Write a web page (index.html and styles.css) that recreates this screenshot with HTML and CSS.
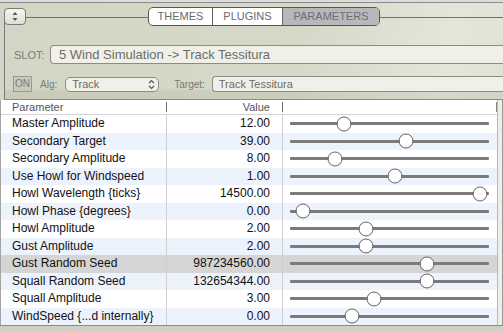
FILE: index.html
```html
<!DOCTYPE html>
<html lang="en">
<head>
    <meta charset="UTF-8">
    <title>Parameters</title>
    <link rel="stylesheet" href="styles.css">
</head>
<body>
    <div class="window">
        <div class="titlebar"></div>

        <div class="chrome">
            <div class="panel">
                <div class="tabbar">
                    <div class="stepper">
                        <svg width="8" height="11" viewBox="0 0 8 11">
                            <path d="M4 1 L6.5 4 L1.5 4 Z" fill="#555"/>
                            <path d="M4 10 L6.5 7 L1.5 7 Z" fill="#555"/>
                        </svg>
                    </div>
                    <div class="tabs">
                        <div class="tab tab-themes">THEMES</div>
                        <div class="tab tab-plugins">PLUGINS</div>
                        <div class="tab tab-params active">PARAMETERS</div>
                    </div>
                </div>

                <div class="slot-row">
                    <span class="label slot-label">SLOT:</span>
                    <div class="field slot-field">5 Wind Simulation -&gt; Track Tessitura</div>
                </div>

                <div class="alg-row">
                    <div class="on-btn">ON</div>
                    <span class="label alg-label">Alg:</span>
                    <div class="popup">
                        <span>Track</span>
                        <svg width="7" height="11" viewBox="0 0 7 11">
                            <path d="M1 4 L3.5 1.5 L6 4" fill="none" stroke="#555" stroke-width="1.2"/>
                            <path d="M1 7 L3.5 9.5 L6 7" fill="none" stroke="#555" stroke-width="1.2"/>
                        </svg>
                    </div>
                    <span class="label target-label">Target:</span>
                    <div class="field target-field">Track Tessitura</div>
                </div>
            </div>
        </div>

        <div class="grid-wrap">
            <div class="grid">
                <div class="grid-head">
                    <div class="head-cell head-name">Parameter</div>
                    <div class="head-cell head-value">Value</div>
                    <div class="head-cell head-slider"></div>
                </div>

                <div class="row">
                    <div class="cell name">Master Amplitude</div>
                    <div class="cell value">12.00</div>
                    <div class="cell slider"><div class="track"><div class="thumb" style="left: 27.1%"></div></div></div>
                </div>
                <div class="row">
                    <div class="cell name">Secondary Target</div>
                    <div class="cell value">39.00</div>
                    <div class="cell slider"><div class="track"><div class="thumb" style="left: 58.1%"></div></div></div>
                </div>
                <div class="row">
                    <div class="cell name">Secondary Amplitude</div>
                    <div class="cell value">8.00</div>
                    <div class="cell slider"><div class="track"><div class="thumb" style="left: 22.6%"></div></div></div>
                </div>
                <div class="row">
                    <div class="cell name">Use Howl for Windspeed</div>
                    <div class="cell value">1.00</div>
                    <div class="cell slider"><div class="track"><div class="thumb" style="left: 52.8%"></div></div></div>
                </div>
                <div class="row">
                    <div class="cell name">Howl Wavelength {ticks}</div>
                    <div class="cell value">14500.00</div>
                    <div class="cell slider"><div class="track"><div class="thumb" style="left: 95.3%"></div></div></div>
                </div>
                <div class="row">
                    <div class="cell name">Howl Phase {degrees}</div>
                    <div class="cell value">0.00</div>
                    <div class="cell slider"><div class="track"><div class="thumb" style="left: 6.5%"></div></div></div>
                </div>
                <div class="row">
                    <div class="cell name">Howl Amplitude</div>
                    <div class="cell value">2.00</div>
                    <div class="cell slider"><div class="track"><div class="thumb" style="left: 38.2%"></div></div></div>
                </div>
                <div class="row">
                    <div class="cell name">Gust Amplitude</div>
                    <div class="cell value">2.00</div>
                    <div class="cell slider"><div class="track"><div class="thumb" style="left: 38.2%"></div></div></div>
                </div>
                <div class="row selected">
                    <div class="cell name">Gust Random Seed</div>
                    <div class="cell value">987234560.00</div>
                    <div class="cell slider"><div class="track"><div class="thumb" style="left: 68.7%"></div></div></div>
                </div>
                <div class="row">
                    <div class="cell name">Squall Random Seed</div>
                    <div class="cell value">132654344.00</div>
                    <div class="cell slider"><div class="track"><div class="thumb" style="left: 68.7%"></div></div></div>
                </div>
                <div class="row">
                    <div class="cell name">Squall Amplitude</div>
                    <div class="cell value">3.00</div>
                    <div class="cell slider"><div class="track"><div class="thumb" style="left: 42.4%"></div></div></div>
                </div>
                <div class="row">
                    <div class="cell name">WindSpeed {...d internally}</div>
                    <div class="cell value">0.00</div>
                    <div class="cell slider"><div class="track"><div class="thumb" style="left: 31.3%"></div></div></div>
                </div>
            </div>
        </div>

        <div class="footer"></div>
    </div>
</body>
</html>
```

FILE: styles.css
```css
body {
    margin: 0;
    font-family: "Liberation Sans", Arial, sans-serif;
    overflow: hidden;
    background-color: #e9e9e9;
}

.window {
    width: 503px;
    height: 332px;
    overflow: hidden;
    background: linear-gradient(100deg, #d3d6c5 0%, #d6d9c8 55%, #e4e6da 82%, #dcdfcf 100%);
}

.titlebar {
    height: 2px;
    background-color: #dcdcdc;
    border-bottom: 1px solid #8c8c8c;
}

.chrome {
    padding: 14px 0 0 4px;
}

.panel {
    margin-right: -20px;
    border-top: 1px solid #707070;
    border-left: 1px solid #7a7a7a;
    border-bottom: 1px solid #8a8a84;
    border-top-left-radius: 5px;
    padding-bottom: 7px;
    background: linear-gradient(transparent 88%, rgba(150, 155, 130, 0.18) 90%);
}

/* tabs */

.tabbar {
    display: flex;
    align-items: center;
    height: 19px;
    margin-top: -11px;
}

.stepper {
    box-sizing: border-box;
    width: 22px;
    height: 17px;
    margin-left: -1px;
    border: 1px solid #7a7a7a;
    border-radius: 4px;
    background: linear-gradient(#f6f6f0, #dedfd4);
    display: flex;
    align-items: center;
    justify-content: center;
}

.stepper svg {
    display: block;
}

.tabs {
    display: flex;
    margin-left: 122px;
    height: 19px;
    box-sizing: border-box;
    border: 1px solid #555;
    border-radius: 5px;
    overflow: hidden;
    background-color: #fff;
}

.tab {
    font-size: 11px;
    color: #6a6a6a;
    line-height: 17px;
    text-align: center;
    box-sizing: border-box;
}

.tab-themes {
    width: 64px;
    border-right: 1px solid #666;
}

.tab-plugins {
    width: 70px;
    border-right: 1px solid #666;
}

.tab-params {
    width: 96px;
}

.tab.active {
    background-color: #b8b8bc;
    color: #6e6e72;
}

/* slot / alg rows */

.label {
    color: #7a7a74;
}

.field {
    box-sizing: border-box;
    flex: 1;
    background-color: #f0f0e9;
    border: 1px solid #8c8c84;
    border-right: none;
    border-radius: 4px 0 0 4px;
    color: #6c6c68;
    white-space: nowrap;
}

.slot-row {
    display: flex;
    align-items: center;
    margin-top: 19px;
    height: 19px;
}

.slot-label {
    font-size: 11px;
    margin-left: 9px;
    width: 36px;
}

.slot-field {
    height: 19px;
    font-size: 13px;
    line-height: 17px;
    padding-left: 8px;
}

.alg-row {
    display: flex;
    align-items: center;
    margin-top: 12px;
    height: 16px;
}

.on-btn {
    box-sizing: border-box;
    width: 19px;
    height: 16px;
    margin-left: 8px;
    border: 1px solid #9a9a92;
    background-color: #c9cbbc;
    color: #7a7a74;
    font-size: 10px;
    line-height: 14px;
    text-align: center;
}

.alg-label {
    font-size: 10px;
    margin-left: 8px;
}

.popup {
    box-sizing: border-box;
    width: 94px;
    height: 15px;
    margin-left: 8px;
    border: 1px solid #8c8c84;
    border-radius: 5px;
    background-color: #f0f0e9;
    color: #6c6c68;
    font-size: 11px;
    display: flex;
    align-items: center;
    justify-content: space-between;
    padding: 0 3px 0 6px;
}

.popup svg {
    display: block;
}

.target-label {
    font-size: 10px;
    margin-left: 15px;
}

.target-field {
    height: 16px;
    margin-left: 7px;
    font-size: 11px;
    line-height: 14px;
    padding-left: 6px;
}

/* parameter table */

.grid-wrap {
    background-color: #eeefea;
    border-right: 1px solid #9a9a94;
}

.grid {
    width: 498px;
    box-sizing: border-box;
    background-color: #fff;
    border-left: 1px solid #a4a4a4;
    border-right: 1px solid #b8b8b8;
}

.grid-head {
    display: grid;
    grid-template-columns: 166px 116px 1fr;
    height: 14px;
    border-bottom: 1px solid #d4d4d4;
    align-items: center;
}

.head-cell {
    font-size: 11px;
    color: #555;
    height: 10px;
    line-height: 10px;
    border-right: 1px solid #6e6e6e;
}

.head-name {
    padding-left: 11px;
}

.head-value {
    text-align: right;
    padding-right: 12px;
}

.head-slider {
    border-right-color: #888;
}

.row {
    display: grid;
    grid-template-columns: 166px 116px 1fr;
    height: 17.5px;
    background-color: #fff;
}

.row:nth-child(odd) {
    background-color: #edf3fd;
}

.row.selected {
    background-color: #d5d5d5;
}

.cell {
    font-size: 12px;
    color: #111;
    line-height: 17.5px;
    white-space: nowrap;
}

.name {
    padding-left: 11px;
    border-right: 1px solid #cfcfcf;
}

.value {
    text-align: right;
    padding-right: 12px;
    border-right: 1px solid #cfcfcf;
}

.slider {
    display: flex;
    align-items: center;
    padding: 0 8px 0 7px;
}

.track {
    position: relative;
    flex: 1;
    height: 3px;
    border-radius: 1px;
    background-color: #7b7b7b;
}

.thumb {
    position: absolute;
    top: 50%;
    width: 15px;
    height: 15px;
    box-sizing: border-box;
    border: 1px solid #666;
    border-radius: 50%;
    background: radial-gradient(circle at 50% 35%, #fff 55%, #ececec 100%);
    transform: translate(-50%, -50%);
}

.footer {
    height: 6px;
    border-top: 1px solid #8a8a84;
    background-color: #cfd1c3;
}
```
